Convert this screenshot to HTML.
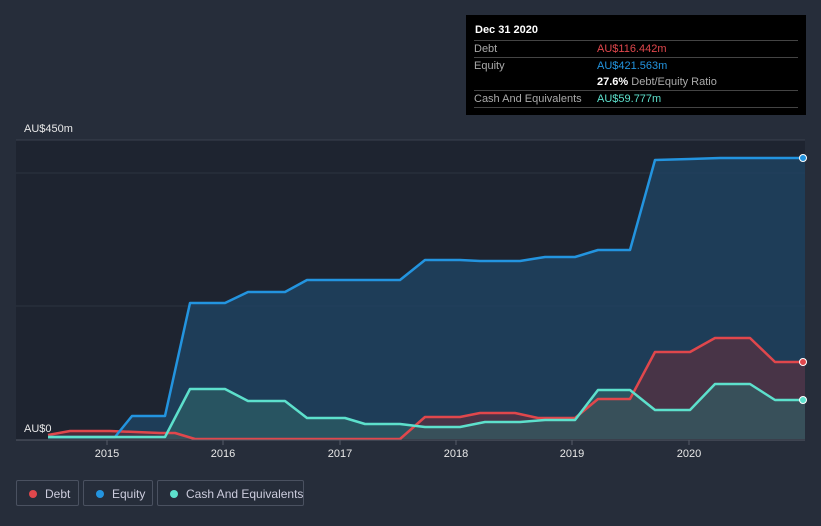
<!DOCTYPE html><html><head><style>
html,body{margin:0;width:821px;height:526px;overflow:hidden}
body{background:#262d3a;font-family:"Liberation Sans",sans-serif;position:relative}
.tt{position:absolute;left:466px;top:15px;width:340px;height:100px;background:#000;color:#fff;font-size:11px}
.row{position:absolute;left:8px;width:324px;border-top:1px solid #444;height:17px;line-height:17px;color:#aaa}
.lg{position:absolute;top:480px;height:26px;border:1px solid #4a5160;border-radius:2px;color:#ccd;font-size:12px;line-height:26px;box-sizing:border-box;white-space:nowrap}
.lg i{position:absolute;left:12px;top:9px;width:8px;height:8px;border-radius:50%}
</style></head><body>
<svg width="821" height="526" style="position:absolute;left:0;top:0">
<rect x="16" y="140" width="789" height="300" fill="#1e2430"/>
<line x1="16" y1="140" x2="805" y2="140" stroke="#3a414e"/>
<line x1="16" y1="173" x2="805" y2="173" stroke="#2c3340"/>
<line x1="16" y1="306" x2="805" y2="306" stroke="#2c3340"/>
<path d="M48,437 L115,437 132,416 165,416 190,303 225,303 248,292 285,292 307,280 400,280 425,260 460,260 480,261 520,261 545,257 575,257 598,250 630,250 655,160 690,159 720,158 805,158 L805,439 48,439Z" fill="#1f4566" opacity="0.75"/>
<path d="M48,435 L70,431 110,431 160,433 175,433 195,439 400,439 425,417 460,417 480,413 515,413 538,418 575,418 598,399 630,399 655,352 690,352 715,338 750,338 775,362 805,362 L805,439 48,439Z" fill="#5a3040" opacity="0.7"/>
<path d="M48,437 L165,437 190,389 225,389 248,401 285,401 307,418 345,418 365,424 400,424 425,427 460,427 485,422 520,422 545,420 575,420 598,390 630,390 655,410 690,410 715,384 750,384 775,400 805,400 L805,439 48,439Z" fill="#2e6468" opacity="0.6"/>
<g stroke-linejoin="round" fill="none" stroke-width="2.5">
<polyline points="48,435 70,431 110,431 160,433 175,433 195,439 400,439 425,417 460,417 480,413 515,413 538,418 575,418 598,399 630,399 655,352 690,352 715,338 750,338 775,362 805,362" stroke="#e0474c"/>
<polyline points="48,437 115,437 132,416 165,416 190,303 225,303 248,292 285,292 307,280 400,280 425,260 460,260 480,261 520,261 545,257 575,257 598,250 630,250 655,160 690,159 720,158 805,158" stroke="#2394df"/>
<polyline points="48,437 165,437 190,389 225,389 248,401 285,401 307,418 345,418 365,424 400,424 425,427 460,427 485,422 520,422 545,420 575,420 598,390 630,390 655,410 690,410 715,384 750,384 775,400 805,400" stroke="#5de0cc"/>
</g>
<circle cx="803" cy="158" r="3.5" fill="#2394df" stroke="#fff"/>
<circle cx="803" cy="362" r="3.5" fill="#e0474c" stroke="#fff"/>
<circle cx="803" cy="400" r="3.5" fill="#5de0cc" stroke="#fff"/>
<line x1="16" y1="440" x2="805" y2="440" stroke="#555c68"/>
<g stroke="#555c68"><line x1="107" y1="440" x2="107" y2="445"/><line x1="223" y1="440" x2="223" y2="445"/><line x1="340" y1="440" x2="340" y2="445"/><line x1="456" y1="440" x2="456" y2="445"/><line x1="572" y1="440" x2="572" y2="445"/><line x1="689" y1="440" x2="689" y2="445"/></g>
<g fill="#e8e8e8" font-size="11" text-anchor="middle" font-family="Liberation Sans"><text x="107" y="457">2015</text><text x="223" y="457">2016</text><text x="340" y="457">2017</text><text x="456" y="457">2018</text><text x="572" y="457">2019</text><text x="689" y="457">2020</text></g>
<text x="24" y="132" fill="#e8e8e8" font-size="11" font-family="Liberation Sans">AU$450m</text>
<text x="24" y="432" fill="#e8e8e8" font-size="11" font-family="Liberation Sans">AU$0</text>
</svg>
<div class="tt">
<div style="position:absolute;left:9px;top:9px;font-weight:bold">Dec 31 2020</div>
<div class="row" style="top:25px">Debt<span style="position:absolute;left:123px;color:#e0474c">AU$116.442m</span></div>
<div class="row" style="top:42px">Equity<span style="position:absolute;left:123px;color:#2394df">AU$421.563m</span></div>
<div class="row" style="top:59px;border:0"><span style="position:absolute;left:123px;color:#aaa"><b style="color:#fff">27.6%</b> Debt/Equity Ratio</span></div>
<div class="row" style="top:75px">Cash And Equivalents<span style="position:absolute;left:123px;color:#5de0cc">AU$59.777m</span></div>
<div class="row" style="top:92px;height:0"></div>
</div>
<div class="lg" style="left:16px;width:63px"><i style="background:#e0474c"></i><span style="position:absolute;left:28px">Debt</span></div>
<div class="lg" style="left:83px;width:70px"><i style="background:#2394df"></i><span style="position:absolute;left:28px">Equity</span></div>
<div class="lg" style="left:157px;width:147px"><i style="background:#5de0cc"></i><span style="position:absolute;left:28px">Cash And Equivalents</span></div>
</body></html>
